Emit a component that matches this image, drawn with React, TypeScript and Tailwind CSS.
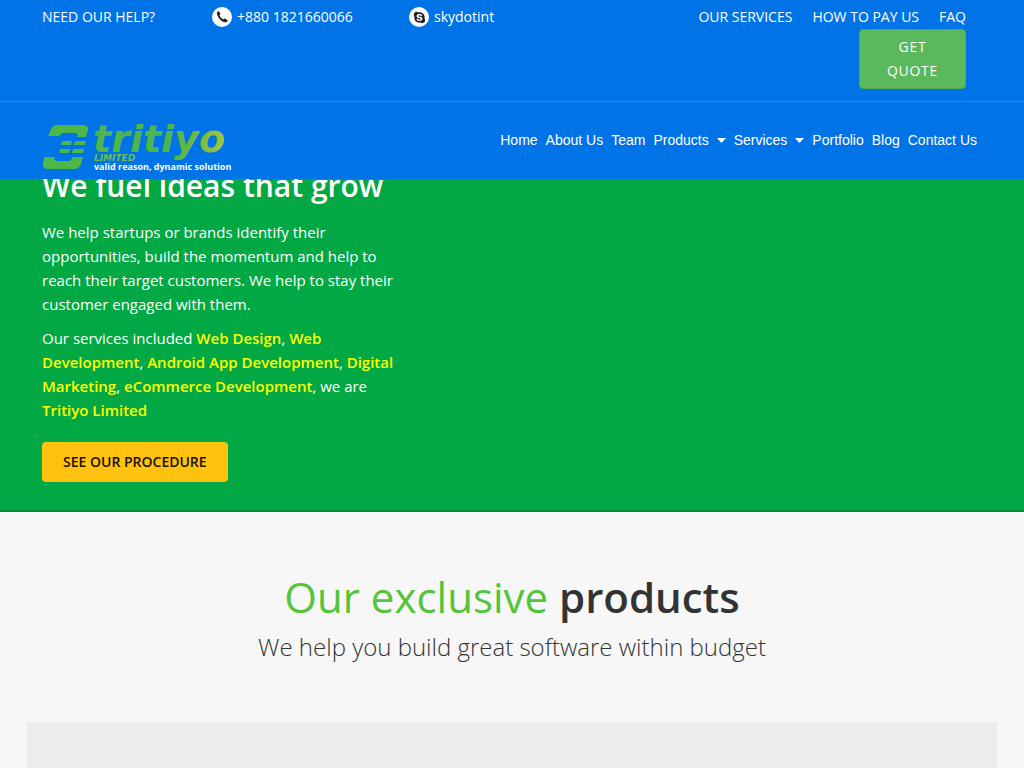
import { FaSkype } from 'react-icons/fa';

interface NavItem {
  label: string;
  hasMenu?: boolean;
}

const topLinks = ['OUR SERVICES', 'HOW TO PAY US', 'FAQ'];

const navItems: NavItem[] = [
  { label: 'Home' },
  { label: 'About Us' },
  { label: 'Team' },
  { label: 'Products', hasMenu: true },
  { label: 'Services', hasMenu: true },
  { label: 'Portfolio' },
  { label: 'Blog' },
  { label: 'Contact Us' },
];

const Logo = () => (
  <svg width="190" height="56" viewBox="0 -6 190 56" role="img" aria-label="Tritiyo Limited">
    <defs>
      <linearGradient id="wordmark" x1="0" x2="1" y1="0" y2="0">
        <stop offset="0.6" stopColor="#4db54a" />
        <stop offset="0.85" stopColor="#7fbd42" />
        <stop offset="1" stopColor="#a3c83a" />
      </linearGradient>
    </defs>
    {/* Símbolo */}
    <g fill="#4fb648">
      <path d="M14 3H40Q47 3 46 8L44 15H35L36 13L34 11H20L17 14H6L9 7Q11 3 14 3Z" />
      <path d="M2 35H13L12 37L14 39H28L31 35H41L39 42Q37 47 32 47H6Q0 47 1 41Z" />
      <path d="M20 19H30L29 23H19ZM33 19H44L43 23H32Z" />
      <path d="M18 27H28L27 31H17ZM31 27H42L41 31H30Z" />
    </g>
    <g fontWeight="bold">
      <text x="51" y="30" fontSize="38" fontStyle="italic" fontFamily="DejaVu Sans, sans-serif" fill="url(#wordmark)">tritiyo</text>
      <text x="52" y="39" fontSize="9" fontStyle="italic" fontFamily="DejaVu Sans, sans-serif" fill="#6cbf4a">LIMITED</text>
      <text x="52" y="48" fontSize="9" fontFamily="Open Sans, sans-serif" fill="#ffffff">valid reason, dynamic solution</text>
    </g>
  </svg>
);

const PhoneIcon = () => (
  <svg width="12" height="12" viewBox="0 0 12 12" fill="currentColor" aria-hidden="true">
    <path d="M1 1.2C1.9.2 2.7.1 3.3.9L4.3 2.5C4.6 3.1 4.4 3.6 3.5 4.2C3.9 5.9 5.6 7.7 7.6 8.4C8.2 7.5 8.8 7.3 9.4 7.7L11.2 8.9C11.9 9.5 11.6 10.3 10.7 11C7.3 13 .2 6.3 1 1.2Z" />
  </svg>
);

const Caret = () => (
  <svg width="9" height="5" viewBox="0 0 9 5" fill="currentColor" aria-hidden="true">
    <path d="M0 0H9L4.5 5Z" />
  </svg>
);

const Header = () => (
  <header className="fixed inset-x-0 top-0 z-10 bg-[#0073e6] text-white">
    {/* Barra superior */}
    <div className="border-b border-[#1a93f5] pb-3">
      <div className="mx-auto flex max-w-[970px] items-start justify-between pl-[15px] pr-[31px] text-sm leading-6">
        <div className="flex pt-[5px]">
          <span className="w-[170px]">NEED OUR HELP?</span>
          <a href="#phone" className="flex w-[197px] items-center gap-[5px]">
            <span className="flex size-5 items-center justify-center rounded-full bg-white text-[#2b1a14]">
              <PhoneIcon />
            </span>
            +880 1821660066
          </a>
          <a href="#skype" className="flex items-center gap-[5px]">
            <span className="flex size-5 items-center justify-center rounded-full bg-white text-[#222222]">
              <FaSkype size={13} />
            </span>
            skydotint
          </a>
        </div>
        <div className="flex flex-col items-end pt-[5px]">
          <nav className="flex gap-5">
            {topLinks.map((label) => (
              <a key={label} href="#top">{label}</a>
            ))}
          </nav>
          <button className="w-[107px] rounded border border-[#4cae4c] bg-[#5cb85c] px-6 py-[5px] tracking-wider">
            GET QUOTE
          </button>
        </div>
      </div>
    </div>

    {/* Menú principal */}
    <div className="mx-auto flex max-w-[970px] items-start justify-between pb-[7px] pl-[15px] pr-5 pt-[14px]">
      <a href="#home"><Logo /></a>
      <nav className="flex gap-2 pt-[14px] font-['Liberation_Sans',sans-serif] text-sm leading-5">
        {navItems.map((item) => (
          <a key={item.label} href="#menu" className="flex items-center gap-2">
            {item.label}
            {item.hasMenu && <Caret />}
          </a>
        ))}
      </nav>
    </div>
  </header>
);

const Service = ({ name }: { name: string }) => (
  <a href="#service" className="font-semibold text-[#ffff00]">{name}</a>
);

const Hero = () => (
  <section className="border-b-2 border-[#028c38] bg-[#02a843] pb-7 pt-[166px] text-white">
    <div className="mx-auto max-w-[970px] px-[15px]">
      <div className="max-w-[356px] text-[15px] leading-6">
        <h1 className="mb-[14px] text-[30px] font-semibold leading-10">We fuel ideas that grow</h1>
        <p className="mb-[10px]">
          We help startups or brands identify their opportunities, build the momentum and help to
          reach their target customers. We help to stay their customer engaged with them.
        </p>
        <p className="mb-5">
          Our services included <Service name="Web Design" />, <Service name="Web Development" />,{' '}
          <Service name="Android App Development" />, <Service name="Digital Marketing" />,{' '}
          <Service name="eCommerce Development" />, we are <Service name="Tritiyo Limited" />
        </p>
        <button className="block h-10 rounded bg-[#ffc20e] px-[21px] text-sm font-semibold text-[#1a1000]">
          SEE OUR PROCEDURE
        </button>
      </div>
    </div>
  </section>
);

const Products = () => (
  <section className="bg-[#f7f7f7] pt-[55px] text-center text-[#333333]">
    <h2 className="text-[42px] leading-[60px] text-[#54c43a]">
      Our exclusive <strong className="font-semibold text-[#333333]">products</strong>
    </h2>
    <p className="text-2xl font-light leading-10">We help you build great software within budget</p>
    <div className="mx-auto mt-[55px] min-h-[46px] max-w-[970px] bg-[#ececee]" />
  </section>
);

const App = () => (
  <div className="min-h-screen bg-[#f7f7f7] font-['Open_Sans',sans-serif]">
    <Header />
    <main>
      <Hero />
      <Products />
    </main>
  </div>
);

export default App;
